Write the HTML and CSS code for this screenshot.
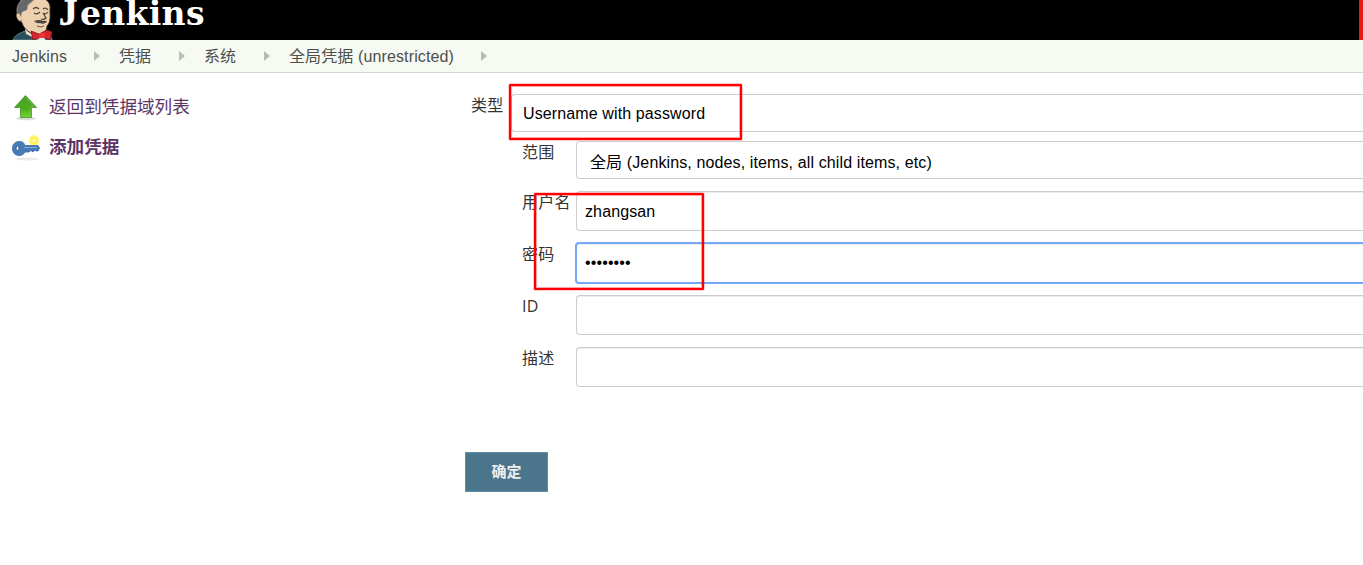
FILE: index.html
```html
<!DOCTYPE html>
<html lang="zh-CN">
<head>
<meta charset="utf-8">
<title>Jenkins</title>
<link rel="stylesheet" href="styles.css">
</head>
<body>
<header class="header">
  <svg class="butler" width="42" height="40" viewBox="0 0 42 40">
    <path d="M1 40C2 36 6 34 13 31L33 34Q40 35 40 40Z" fill="#294e5c" stroke="#69828b"/>
    <path d="M12 24L14 34L26 40L34 32L31 22Z" fill="#efd7b8"/>
    <path d="M9 0C6 6 5 12 7 19L10 23C12 29 17 33 24 35C31 35 35 31 35 26C39 22 38 16 38 10C39 4 36 1 32-2L12-3Z" fill="#edd0ae" stroke="#302e2d" stroke-width="1"/>
    <path d="M13-2C6 1 3 9 6 16L8 20L10 12L15 10L16 5L22 0Z" fill="#65676a" stroke="#aaa" stroke-width=".6"/>
    <path d="M7 13Q3 13 5 18Q7 23 10 20" fill="#edcba6" stroke="#795e4b" stroke-width=".7"/>
    <path d="M21 9Q24 6 27 9M31 9Q34 7 36 10M22 13Q25 15 28 12M31 13Q34 15 36 12M31 13L34 18Q32 20 29 19" fill="none" stroke="#554136" stroke-width="1.2"/>
    <path d="M22 21Q28 19 31 21Q34 20 35 22Q31 25 28 23Q25 24 22 21Z" fill="#4c4542"/>
    <path d="M25 26Q28 28 32 26" fill="none" stroke="#75513d"/>
    <path d="M24 33L27 40H33L35 32Z" fill="#e9eef0"/>
    <path d="M19 31L27 34L35 30L40 32L38 40L30 37L21 40Z" fill="#d6252c" stroke="#831c21" stroke-width=".8"/>
    <rect x="27" y="33" width="6" height="5" rx="1" fill="#ee3437"/>
  </svg>
  <span class="wordmark"><span class="initial">J</span>enkins</span>
  <span class="alert"></span>
</header>
<nav class="crumbs">
  <span class="crumb c1">Jenkins</span><i class="arrow"></i>
  <span class="crumb c2">凭据</span><i class="arrow"></i>
  <span class="crumb c3">系统</span><i class="arrow"></i>
  <span class="crumb c4">全局凭据 (unrestricted)</span><i class="arrow"></i>
</nav>
<div class="page">
  <aside class="side">
    <a class="task">
      <svg width="28" height="28" viewBox="0 0 28 28">
        <defs><linearGradient id="g" x2="0" y2="1"><stop stop-color="#4a9d27"/><stop offset=".6" stop-color="#4fad20"/><stop offset="1" stop-color="#70d633"/></linearGradient></defs>
        <ellipse cx="14" cy="25.500" rx="10" ry="1.800" fill="#ddd"/>
        <path d="M13.500 2.500L24.500 14.500H19.500V24.500H8.500V14.500H2.500Z" fill="url(#g)" stroke="#439326" stroke-width=".8"/>
        <path d="M13.500 4.300L22 13.800H18.700V23.600" fill="none" stroke="#79c454" stroke-width=".7"/>
      </svg>
      <span>返回到凭据域列表</span>
    </a>
    <a class="task strong">
      <svg width="28" height="28" viewBox="0 0 28 28">
        <ellipse cx="15" cy="26" rx="12" ry="1.500" fill="#e9e9e9"/>
        <circle cx="22" cy="7.500" r="5.500" fill="#fff6a0"/><circle cx="22" cy="7.500" r="4" fill="#fff24b"/><circle cx="22" cy="7.500" r="2" fill="#fff9b0"/>
        <path d="M7 8.500C11 8.500 12 10 13 12.500H26L27.500 15L26 18H24L23 17L21 19L19 17.500L17 19H13C12 21 10 22.500 7 22.500C3 22.500.5 19.500.5 15.500S3 8.500 7 8.500Z" fill="#477cb7" stroke="#386a9e" stroke-width=".8"/>
        <path d="M12 14.500H25" stroke="#82aad2"/>
        <ellipse cx="5.500" cy="15.300" rx="1.500" ry="2.300" fill="#fff" stroke="#305d8d"/>
      </svg>
      <span>添加凭据</span>
    </a>
  </aside>
  <main class="form">
    <div class="kind"><label>类型</label><div class="field select first">Username with password</div></div>
    <div class="rows">
      <div class="row scope"><label>范围</label><div class="field select">全局 (Jenkins, nodes, items, all child items, etc)</div></div>
      <div class="row user"><label>用户名</label><div class="field input">zhangsan</div></div>
      <div class="row pass"><label>密码</label><div class="field input focus"><span class="dots">••••••••</span></div></div>
      <div class="row ident"><label class="latin">ID</label><div class="field input"></div></div>
      <div class="row"><label>描述</label><div class="field input"></div></div>
    </div>
    <button class="submit">确定</button>
  </main>
</div>
<div class="mark mark-kind"></div>
<div class="mark mark-login"></div>
</body>
</html>
```
FILE: styles.css
```css
* { box-sizing: border-box; }
body { margin: 0; width: 1363px; height: 565px; overflow: hidden; background: #fff; color: #333; font: 16px/20px "Liberation Sans", "Noto Sans CJK SC", sans-serif; letter-spacing: .12px; }
.header { display: flex; height: 40px; background: #000; padding-left: 12px; overflow: hidden; }
.butler { flex: none; }
.wordmark { margin-left: 5px; color: #fff; font: bold 33px/26px "DejaVu Serif", serif; letter-spacing: .3px; }
.initial { display: inline-block; width: 21px; font: bold 37px/26px "Liberation Serif", serif; -webkit-text-stroke: .6px #fff; }
.alert { width: 4px; margin-left: auto; background: #e81818; }
.crumbs { display: flex; align-items: center; height: 33px; padding-left: 12px; background: #f6faf2; border-bottom: 1px solid #d3d7cf; color: #4d4f4b; white-space: nowrap; }
.crumb { flex: none; padding-top: 2px; }
.c1 { width: 82px; }
.c2 { width: 60px; }
.c3 { width: 60px; }
.c4 { width: 192px; }
.arrow { width: 0; height: 0; flex: none; border-left: 6px solid #b9bcb5; border-top: 5px solid transparent; border-bottom: 5px solid transparent; margin-right: 19px; }
.page { display: flex; }
.side { width: 465px; padding: 20px 0 0 12px; }
.task { display: flex; gap: 9px; height: 40px; color: #5c3566; font-size: 17.600px; line-height: 28px; letter-spacing: 0; }
.task svg { flex: none; }
.strong { font-weight: bold; }
.form { flex: 1; padding-top: 21px; }
.kind { display: flex; height: 47px; padding-left: 6px; }
.kind label { width: 40px; }
.rows { padding-left: 57px; }
.row { display: flex; height: 52px; }
label { flex: none; line-height: 24px; letter-spacing: .3px; }
.row label { width: 54px; white-space: nowrap; }
.field { flex: 1; border: 1px solid #ccc; border-right: 0; border-radius: 4px 0 0 4px; color: #000; white-space: nowrap; }
.select { height: 38px; line-height: 36px; padding: 1px 13px 0; }
.first { padding-left: 11px; }
.scope { height: 50px; }
.scope .select { padding-top: 3px; }
.input { height: 40px; line-height: 40px; padding-left: 8px; box-shadow: inset 0 1px 1px rgba(0,0,0,.075); }
.pass .input { height: 42px; margin: -1px 0 0 -1px; border: 2px solid #75a7f5; border-right: 0; line-height: 38px; }
.dots { font-size: 16px; }
.row .latin { font-family: "Open Sans", sans-serif; line-height: 22px; }
.submit { display: block; width: 83px; height: 40px; margin: 53px 0 0; padding: 0 0 2px; border: 1px solid #5b8da5; background: #4b758b; color: #eee; font: bold 15px/36px "Noto Sans CJK SC", sans-serif; }
.mark { position: absolute; border: 2px solid #f00; border-radius: 1px; box-shadow: 0 0 0 .5px rgba(255,0,0,.4), inset 0 0 0 1px rgba(255,0,0,.35); }
.mark-kind { left: 509px; top: 84px; width: 233px; height: 56px; }
.mark-login { left: 534px; top: 193px; width: 170px; height: 97px; }
```
